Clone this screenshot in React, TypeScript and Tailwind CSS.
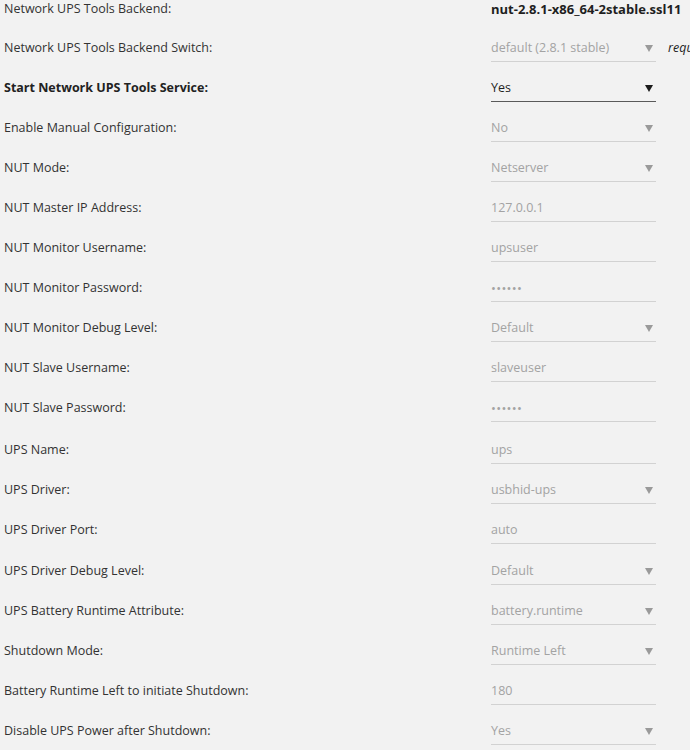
import React from "react";

type Row = {
  label: string;
  value: string;
  kind: "static" | "select" | "input";
  active?: boolean;
  bold?: boolean;
  note?: string;
  h?: string;
};

const rows: Row[] = [
  { label: "Network UPS Tools Backend:", value: "nut-2.8.1-x86_64-2stable.ssl11", kind: "static", h: "h-[39px]" },
  { label: "Network UPS Tools Backend Switch:", value: "default (2.8.1 stable)", kind: "select", note: "required" },
  { label: "Start Network UPS Tools Service:", value: "Yes", kind: "select", active: true, bold: true },
  { label: "Enable Manual Configuration:", value: "No", kind: "select" },
  { label: "NUT Mode:", value: "Netserver", kind: "select" },
  { label: "NUT Master IP Address:", value: "127.0.0.1", kind: "input" },
  { label: "NUT Monitor Username:", value: "upsuser", kind: "input" },
  { label: "NUT Monitor Password:", value: "••••••", kind: "input" },
  { label: "NUT Monitor Debug Level:", value: "Default", kind: "select" },
  { label: "NUT Slave Username:", value: "slaveuser", kind: "input" },
  { label: "NUT Slave Password:", value: "••••••", kind: "input", h: "h-[42px]" },
  { label: "UPS Name:", value: "ups", kind: "input" },
  { label: "UPS Driver:", value: "usbhid-ups", kind: "select" },
  { label: "UPS Driver Port:", value: "auto", kind: "input", h: "h-[41px]" },
  { label: "UPS Driver Debug Level:", value: "Default", kind: "select" },
  { label: "UPS Battery Runtime Attribute:", value: "battery.runtime", kind: "select" },
  { label: "Shutdown Mode:", value: "Runtime Left", kind: "select" },
  { label: "Battery Runtime Left to initiate Shutdown:", value: "180", kind: "input" },
  { label: "Disable UPS Power after Shutdown:", value: "Yes", kind: "select" },
];

function Arrow({ active }: { active?: boolean }) {
  return (
    <svg width="8" height="7" viewBox="0 0 8 7" className={active ? "fill-[#1c1c1c]" : "fill-[#9a9a9a]"}>
      <path d="M0 0 H8 L4 7 Z" />
    </svg>
  );
}

function Field({ row }: { row: Row }) {
  if (row.kind === "static") {
    return <span className="font-bold text-[13px] text-[#1f1f1f] leading-[18px] whitespace-nowrap">{row.value}</span>;
  }
  const isPw = row.value.startsWith("•");
  return (
    <div
      className={`w-[165px] shrink-0 h-[23px] flex items-start justify-between pr-[3px] border-b ${
        row.active ? "border-[#5a5a5a] text-[#1f1f1f]" : "border-[#d2d2d2] text-[#a3a3a3]"
      }`}
    >
      <span className={`leading-[18px] whitespace-nowrap ${isPw ? "text-[13px] tracking-[0.3px]" : ""}`}>
        {row.value}
      </span>
      {row.kind === "select" && (
        <span className="h-[18px] flex items-center">
          <Arrow active={row.active} />
        </span>
      )}
    </div>
  );
}

export default function App() {
  return (
    <div
      className="w-[690px] h-[750px] overflow-hidden bg-[#f2f2f2] text-[12.5px] text-[#333333]"
      style={{ fontFamily: '"Open Sans", "Noto Sans", sans-serif' }}
    >
      {rows.map((row) => (
        <div key={row.label} className={`${row.h ?? "h-[40px]"} flex items-start`}>
          <div
            className={`w-[491px] shrink-0 pl-[4px] leading-[18px] whitespace-nowrap ${
              row.bold ? "font-bold text-[#222]" : ""
            }`}
          >
            {row.label}
          </div>
          <Field row={row} />
          {row.note && (
            <span className="ml-[12px] italic text-[#222] leading-[18px] whitespace-nowrap">{row.note}</span>
          )}
        </div>
      ))}
    </div>
  );
}
